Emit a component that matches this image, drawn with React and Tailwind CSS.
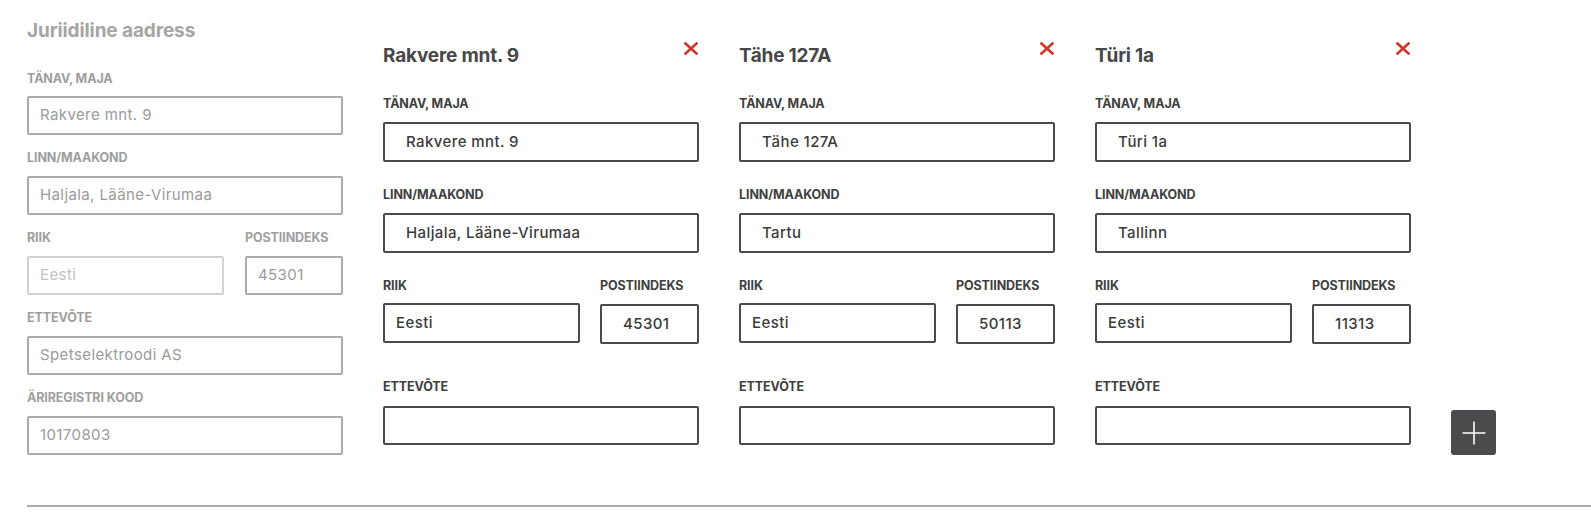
import React from "react";

function Label({ children, muted, className = "" }) {
  return (
    <div
      className={`h-[16px] text-[12.5px] leading-[16px] font-bold uppercase tracking-[-0.1px] ${
        muted ? "text-[#9e9e9e]" : "text-[#404040]"
      } ${className}`}
    >
      {children}
    </div>
  );
}

function LeftInput({ value, w = "w-full", disabled }) {
  return (
    <div
      className={`${w} h-[39px] border-2 rounded-[2px] flex items-center px-[11px] text-[15px] tracking-[0.4px] ${
        disabled
          ? "border-[#d2d2d2] text-[#c2c2c2]"
          : "border-[#ababab] text-[#9a9a9a]"
      }`}
    >
      {value}
    </div>
  );
}

function DarkInput({ value, w = "w-full", pl = "pl-[21px]" }) {
  return (
    <div
      className={`${w} h-[40px] border-2 border-[#4a4a4a] rounded-[2px] flex items-center ${pl} text-[15px] tracking-[0.4px] font-medium text-[#3b3b3b]`}
    >
      {value}
    </div>
  );
}

function RedX() {
  return (
    <svg width="14" height="13" viewBox="0 0 14 13" className="mt-[0px] mr-[1px]">
      <path d="M1.5 1.5 L12.5 11.5 M12.5 1.5 L1.5 11.5" stroke="#d2372b" strokeWidth="2.6" strokeLinecap="square" />
    </svg>
  );
}

function AddressCol({ title, street, city, zip }) {
  return (
    <div className="w-[316px] pt-[42px] flex flex-col">
      <div className="flex justify-between items-start h-[24px]">
        <h3 className="text-[19px] leading-[24px] font-bold tracking-[-0.2px] text-[#474747] mt-[2px]">{title}</h3>
        <RedX />
      </div>
      <Label className="mt-[30px]">Tänav, maja</Label>
      <div className="mt-[10px]">
        <DarkInput value={street} />
      </div>
      <Label className="mt-[25px]">Linn/maakond</Label>
      <div className="mt-[10px]">
        <DarkInput value={city} />
      </div>
      <div className="mt-[25px] flex gap-[20px]">
        <div className="w-[197px]">
          <Label>Riik</Label>
          <div className="mt-[9px]">
            <DarkInput value="Eesti" pl="pl-[11px]" />
          </div>
        </div>
        <div className="w-[99px]">
          <Label>Postiindeks</Label>
          <div className="mt-[10px]">
            <DarkInput value={zip} pl="pl-[21px]" />
          </div>
        </div>
      </div>
      <Label className="mt-[35px]">Ettevõte</Label>
      <div className="mt-[11px]">
        <div className="w-full h-[39px] border-2 border-[#4a4a4a] rounded-[2px]" />
      </div>
    </div>
  );
}

export default function App() {
  return (
    <div className="w-[1591px] h-[532px] bg-white pl-[27px] overflow-hidden font-['Inter','Noto_Sans',sans-serif]">
      <div className="flex gap-[40px]">
        <div className="w-[316px] pt-[19px] flex flex-col">
          <h2 className="h-[24px] text-[19px] leading-[24px] font-bold tracking-[-0.1px] text-[#a5a5a5]">
            Juriidiline aadress
          </h2>
          <Label muted className="mt-[28px]">Tänav, maja</Label>
          <div className="mt-[9px]">
            <LeftInput value="Rakvere mnt. 9" />
          </div>
          <Label muted className="mt-[15px]">Linn/maakond</Label>
          <div className="mt-[10px]">
            <LeftInput value="Haljala, Lääne-Virumaa" />
          </div>
          <div className="mt-[15px] flex gap-[21px]">
            <div className="w-[197px]">
              <Label muted>Riik</Label>
              <div className="mt-[10px]">
                <LeftInput value="Eesti" disabled />
              </div>
            </div>
            <div className="w-[98px]">
              <Label muted>Postiindeks</Label>
              <div className="mt-[10px]">
                <LeftInput value="45301" />
              </div>
            </div>
          </div>
          <Label muted className="mt-[15px]">Ettevõte</Label>
          <div className="mt-[10px]">
            <LeftInput value="Spetselektroodi AS" />
          </div>
          <Label muted className="mt-[15px]">Äriregistri kood</Label>
          <div className="mt-[10px]">
            <LeftInput value="10170803" />
          </div>
        </div>

        <AddressCol title="Rakvere mnt. 9" street="Rakvere mnt. 9" city="Haljala, Lääne-Virumaa" zip="45301" />
        <AddressCol title="Tähe 127A" street="Tähe 127A" city="Tartu" zip="50113" />
        <AddressCol title="Türi 1a" street="Türi 1a" city="Tallinn" zip="11313" />

        <button className="self-end w-[45px] h-[45px] bg-[#4b4b4d] rounded-[3px] flex items-center justify-center">
          <svg width="24" height="24" viewBox="0 0 24 24">
            <path d="M12 0.5 V23.5 M0.5 12 H23.5" stroke="#ffffff" strokeWidth="1.6" />
          </svg>
        </button>
      </div>
      <div className="mt-[50px] border-t-2 border-[#ababab]" />
    </div>
  );
}
